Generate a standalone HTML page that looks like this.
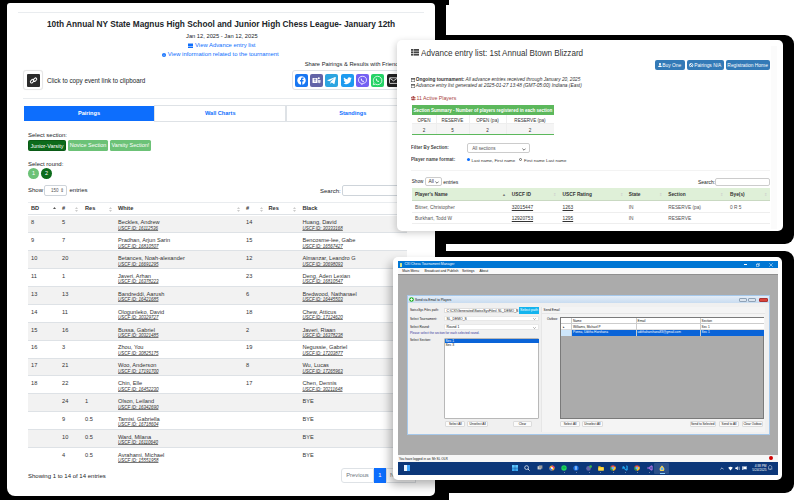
<!DOCTYPE html>
<html><head><meta charset="utf-8">
<style>
*{margin:0;padding:0;box-sizing:border-box}
html,body{width:800px;height:500px;overflow:hidden;background:#fff;font-family:"Liberation Sans",sans-serif;color:#212529}
.a{position:absolute;white-space:nowrap}
.blk{position:absolute;background:#000;border-radius:9px}
.card{position:absolute;background:#fff;overflow:hidden}
/* card1 */
#c1{left:7px;top:3px;width:428px;height:493.4px;border-radius:3px 4px 5px 8px}
#c2{left:397px;top:40px;width:386px;height:190.5px;border-radius:5px;box-shadow:-1px 2px 7px rgba(0,0,0,.2)}
#c3{left:393px;top:257px;width:389px;height:223px;border-radius:5px;box-shadow:-3px 5px 10px rgba(0,0,0,.3)}
.t6{font-size:6px;line-height:8px}
.row{position:absolute;left:21px;width:379px;height:17.87px;border-bottom:1px solid #dee2e6}
.row.g{background:#f2f2f2}
.c{position:absolute;font-size:5.65px;line-height:7px;color:#333;white-space:nowrap}
.u{position:absolute;font-size:4.5px;line-height:5px;color:#333;text-decoration:underline;text-decoration-thickness:0.5px;text-decoration-color:#777;text-underline-offset:0.4px;text-decoration-skip-ink:none;white-space:nowrap;font-style:italic}
</style></head><body>
<!-- black shapes -->
<div class="blk" style="left:-10px;top:-10px;width:456px;height:520px"></div>
<div style="position:absolute;left:436px;top:0;width:13px;height:4.7px;background:#000"></div>
<div style="position:absolute;left:436px;top:480px;width:13px;height:20px;background:#000"></div>
<div class="blk" style="left:385px;top:35px;width:409px;height:209px"></div>
<div class="blk" style="left:385px;top:251px;width:409px;height:242px"></div>

<!-- CARD 1 -->
<div class="card" id="c1">
  <div class="a" style="left:11px;top:9px;width:406px;height:1px;background:#e9ecef"></div>
  <div class="a" id="title" style="left:40px;top:15.4px;font-size:9.6px;line-height:12px;font-weight:bold;color:#212529;transform:scaleX(0.865);transform-origin:0 0">10th Annual NY State Magnus High School and Junior High Chess League- January 12th</div>
  <div class="a" id="date" style="left:179px;top:30.2px;font-size:5.75px;line-height:7px;color:#212529">Jan 12, 2025 - Jan 12, 2025</div>
  <div class="a" style="left:180.5px;top:40px;width:5.5px;height:4.5px;background:repeating-linear-gradient(0deg,#0d6efd 0 1px,#8cb8fb 1px 1.5px)"></div>
  <div class="a" id="val" style="left:188px;top:38.8px;font-size:5.9px;line-height:7px;color:#0d6efd">View Advance entry list</div>
  <svg class="a" style="left:154.6px;top:49.6px" width="4" height="4" viewBox="0 0 4 4"><circle cx="2" cy="2" r="2" fill="#0d6efd"/><rect x="1.7" y="1.6" width="0.6" height="1.6" fill="#fff"/><rect x="1.7" y="0.7" width="0.6" height="0.5" fill="#fff"/></svg>
  <div class="a" id="vinfo" style="left:160.8px;top:48px;font-size:5.9px;line-height:7px;color:#0d6efd">View information related to the tournament</div>
  <div class="a" style="left:297.7px;top:58px;font-size:5.75px;line-height:7px;color:#212529">Share Pairings &amp; Results with Friends</div>
  <!-- copy link -->
  <div class="a" style="left:16.4px;top:67.3px;width:20px;height:20px;border:1px solid #e6e6e6;border-radius:3px;background:#fff;box-shadow:0 0 1px rgba(0,0,0,.08)"></div>
  <div class="a" style="left:20px;top:71px;width:13px;height:13px;background:#2b2b2b;border-radius:1px"></div>
  <svg class="a" style="left:22px;top:73px" width="9" height="9" viewBox="0 0 9 9"><g fill="none" stroke="#fff" stroke-width="1"><rect x="1" y="4" width="4" height="2.4" rx="1.2" transform="rotate(-45 3 5)"/><rect x="4" y="2.5" width="4" height="2.4" rx="1.2" transform="rotate(-45 6 3.7)"/></g></svg>
  <div class="a" style="left:40px;top:74px;font-size:6.3px;line-height:7px;color:#212529">Click to copy event link to clipboard</div>
  <!-- share box -->
  <div class="a" style="left:285px;top:67px;width:150px;height:20px;border:1px solid #dee2e6;border-radius:3px"></div>
  <svg class="a" style="left:288px;top:71px" width="13" height="13" viewBox="0 0 13 13"><rect width="13" height="13" rx="2" fill="#1877f2"/><circle cx="6.5" cy="6.5" r="4.2" fill="#fff"/><path d="M7.3 11V7.4h1.1l.2-1.3H7.3v-.8c0-.4.1-.6.6-.6h.7V3.6c-.2 0-.6-.1-1-.1-1 0-1.6.6-1.6 1.7v.9H5v1.3h1v3.6z" fill="#1877f2"/></svg>
  <svg class="a" style="left:303px;top:71px" width="13" height="13" viewBox="0 0 13 13"><rect width="13" height="13" rx="2" fill="#6264a7"/><rect x="2.5" y="4" width="5" height="5" rx=".5" fill="#fff"/><path d="M3.8 5.2h2.4M5 5.2v2.8" stroke="#6264a7" stroke-width=".8"/><circle cx="8.8" cy="4.2" r="1" fill="#fff"/><path d="M8 6h2.5v2.2a1.3 1.3 0 0 1-2.5 0z" fill="#fff" opacity=".8"/></svg>
  <svg class="a" style="left:318px;top:71px" width="13" height="13" viewBox="0 0 13 13"><rect width="13" height="13" rx="2" fill="#2ca5e0"/><path d="M2.2 6.3l8-3.2c.4-.1.7.1.6.6L9.5 9.8c-.1.4-.4.5-.7.3L6.8 8.6l-1 .9c-.1.1-.2.2-.4.2l.1-2 3.6-3.2c.2-.2 0-.2-.2-.1L4.4 7.2 2.5 6.6c-.4-.1-.4-.4-.3-.3z" fill="#fff"/></svg>
  <svg class="a" style="left:334px;top:71px" width="13" height="13" viewBox="0 0 13 13"><rect width="13" height="13" rx="2" fill="#1d9bf0"/><path d="M10.8 4.1c-.3.1-.7.2-1 .3.4-.2.6-.6.8-1-.3.2-.7.3-1.1.4a1.7 1.7 0 0 0-2.9 1.6A4.9 4.9 0 0 1 3 3.6a1.7 1.7 0 0 0 .5 2.3c-.3 0-.5-.1-.8-.2 0 .8.6 1.5 1.4 1.7-.3.1-.5.1-.8 0 .2.7.9 1.2 1.6 1.2A3.4 3.4 0 0 1 2.4 9.3 4.9 4.9 0 0 0 10 5z" fill="#fff"/></svg>
  <svg class="a" style="left:349px;top:71px" width="13" height="13" viewBox="0 0 13 13"><rect width="13" height="13" rx="2" fill="#7360f2"/><path d="M6.5 2.3c2.3 0 4 1.2 4 3.6 0 2.3-1.7 3.5-4 3.5l-.6 1.3-.6-1.4c-1.8-.3-2.8-1.5-2.8-3.4 0-2.4 1.7-3.6 4-3.6z" fill="none" stroke="#fff" stroke-width=".8"/><path d="M5 4.6c.2-.2.5-.1.6.1l.3.5c.1.2 0 .4-.1.5.2.5.6.9 1.1 1.1.1-.1.3-.2.5-.1l.5.3c.2.1.3.4.1.6-.3.4-.7.4-1.2.2A3.5 3.5 0 0 1 4.9 5.8c-.2-.5-.2-.9.1-1.2z" fill="#fff"/></svg>
  <svg class="a" style="left:364px;top:71px" width="13" height="13" viewBox="0 0 13 13"><rect width="13" height="13" rx="2" fill="#25d366"/><path d="M6.5 2.3a4.2 4.2 0 0 0-3.6 6.3l-.6 2.1 2.2-.6a4.2 4.2 0 1 0 2-7.8z" fill="none" stroke="#fff" stroke-width=".8"/><path d="M5 4.6c.2-.2.5-.1.6.1l.3.5c.1.2 0 .4-.1.5.2.5.6.9 1.1 1.1.1-.1.3-.2.5-.1l.5.3c.2.1.3.4.1.6-.3.4-.7.4-1.2.2A3.5 3.5 0 0 1 4.9 5.8c-.2-.5-.2-.9.1-1.2z" fill="#fff"/></svg>
  <svg class="a" style="left:380px;top:71px" width="13" height="13" viewBox="0 0 13 13"><rect width="13" height="13" rx="2" fill="#212121"/><rect x="2.5" y="3.8" width="8" height="5.6" rx=".6" fill="none" stroke="#fff" stroke-width=".8"/><path d="M2.7 4.2l3.8 2.7 3.8-2.7" fill="none" stroke="#fff" stroke-width=".8"/></svg>
  <div class="a" style="left:16px;top:95px;width:411px;height:1px;background:#e9ecef"></div>
  <!-- tabs -->
  <div class="a" style="left:16.75px;top:102.75px;width:130.5px;height:14.9px;background:#0d6efd;color:#fff;font-size:5.6px;line-height:14.9px;text-align:center;font-weight:bold">Pairings</div>
  <div class="a" style="left:147.25px;top:102.2px;width:132px;height:16.6px;border:1px solid #dee2e6;color:#0d6efd;font-size:5.6px;line-height:14.6px;text-align:center;font-weight:bold">Wall Charts</div>
  <div class="a" style="left:279.25px;top:102.2px;width:133px;height:16.6px;border:1px solid #dee2e6;color:#0d6efd;font-size:5.6px;line-height:14.6px;text-align:center;font-weight:bold">Standings</div>
  <div class="a" style="left:21px;top:129px;font-size:6px;line-height:7px">Select section:</div>
  <div class="a" style="left:21px;top:137px;width:38px;height:11px;background:#0c6b1b;border:0.5px solid #0a5a16;border-radius:1.5px;color:#fff;font-size:5.5px;line-height:10px;text-align:center">Junior-Varsity</div>
  <div class="a" style="left:61px;top:137px;width:40px;height:11px;background:#6cc277;border-radius:1.5px;color:#fff;font-size:5.5px;line-height:11px;text-align:center">Novice Section</div>
  <div class="a" style="left:103px;top:137px;width:41px;height:11px;background:#6cc277;border-radius:1.5px;color:#fff;font-size:5.5px;line-height:11px;text-align:center">Varsity Section!</div>
  <div class="a" style="left:21px;top:158px;font-size:6px;line-height:7px">Select round:</div>
  <div class="a" style="left:21px;top:165px;width:11px;height:11px;border-radius:50%;background:#6cc277;color:#fff;font-size:5.5px;line-height:11px;text-align:center">1</div>
  <div class="a" style="left:34px;top:165px;width:11px;height:11px;border-radius:50%;background:#0c6b1b;color:#fff;font-size:5.5px;line-height:11px;text-align:center">2</div>
  <div class="a" style="left:21px;top:183.7px;font-size:6px;line-height:7px">Show</div>
  <div class="a" style="left:37px;top:181.5px;width:23px;height:11.5px;border:1px solid #ced4da;border-radius:2px;font-size:4.5px;line-height:9px;padding-left:6px;color:#555">150 &#8661;</div>
  <div class="a" style="left:62.5px;top:183.7px;font-size:6px;line-height:7px">entries</div>
  <div class="a" style="left:313px;top:184.8px;font-size:6px;line-height:7px">Search:</div>
  <div class="a" style="left:335px;top:181.5px;width:100px;height:11.7px;border:1px solid #ced4da;border-radius:2px"></div>
  <!-- table header -->
  <div class="a" style="left:21px;top:199px;width:379px;height:13px;border-top:1px solid #e9ecef;border-bottom:1.5px solid #dee2e6"></div>
  <div id="thead"><div class="c" style="left:24px;top:202.0px;font-weight:bold">BD</div>
<div class="c" style="left:55px;top:202.0px;font-weight:bold">#</div>
<div class="c" style="left:78px;top:202.0px;font-weight:bold">Res</div>
<div class="c" style="left:111px;top:202.0px;font-weight:bold">White</div>
<div class="c" style="left:239px;top:202.0px;font-weight:bold">#</div>
<div class="c" style="left:261.5px;top:202.0px;font-weight:bold">Res</div>
<div class="c" style="left:295.4px;top:202.0px;font-weight:bold">Black</div>
<svg class="a" style="left:45.5px;top:203.5px" width="3" height="5" viewBox="0 0 3 5"><path d="M0 2L1.5 0L3 2Z" fill="#555"/><path d="M0 3L1.5 5L3 3Z" fill="#fff"/></svg>
<svg class="a" style="left:68.1px;top:203.5px" width="3" height="5" viewBox="0 0 3 5"><path d="M0 2L1.5 0L3 2Z" fill="#ccc"/><path d="M0 3L1.5 5L3 3Z" fill="#ccc"/></svg>
<svg class="a" style="left:102.0px;top:203.5px" width="3" height="5" viewBox="0 0 3 5"><path d="M0 2L1.5 0L3 2Z" fill="#ccc"/><path d="M0 3L1.5 5L3 3Z" fill="#ccc"/></svg>
<svg class="a" style="left:229.5px;top:203.5px" width="3" height="5" viewBox="0 0 3 5"><path d="M0 2L1.5 0L3 2Z" fill="#ccc"/><path d="M0 3L1.5 5L3 3Z" fill="#ccc"/></svg>
<svg class="a" style="left:252.5px;top:203.5px" width="3" height="5" viewBox="0 0 3 5"><path d="M0 2L1.5 0L3 2Z" fill="#ccc"/><path d="M0 3L1.5 5L3 3Z" fill="#ccc"/></svg>
<svg class="a" style="left:286.1px;top:203.5px" width="3" height="5" viewBox="0 0 3 5"><path d="M0 2L1.5 0L3 2Z" fill="#ccc"/><path d="M0 3L1.5 5L3 3Z" fill="#ccc"/></svg></div><!--/thead-->
  <div id="tbody"><div class="row g" style="top:212.6px"></div>
<div class="c" style="left:24px;top:216.29999999999998px">8</div>
<div class="c" style="left:55px;top:216.29999999999998px">5</div>
<div class="c" style="left:111px;top:216.29999999999998px">Beckles, Andrew</div>
<div class="c" style="left:239px;top:216.29999999999998px">14</div>
<div class="c" style="left:295.4px;top:216.29999999999998px">Huang, David</div>
<div class="u" style="left:111px;top:222.79999999999998px">USCF ID: 16112536</div>
<div class="u" style="left:295.4px;top:222.79999999999998px">USCF ID: 30333168</div>
<div class="row" style="top:230.47px"></div>
<div class="c" style="left:24px;top:234.17px">9</div>
<div class="c" style="left:55px;top:234.17px">7</div>
<div class="c" style="left:111px;top:234.17px">Pradhan, Arjun Sarin</div>
<div class="c" style="left:239px;top:234.17px">15</div>
<div class="c" style="left:295.4px;top:234.17px">Bencosme-lee, Gabe</div>
<div class="u" style="left:111px;top:240.67px">USCF ID: 16810507</div>
<div class="u" style="left:295.4px;top:240.67px">USCF ID: 16567427</div>
<div class="row g" style="top:248.34px"></div>
<div class="c" style="left:24px;top:252.04px">10</div>
<div class="c" style="left:55px;top:252.04px">20</div>
<div class="c" style="left:111px;top:252.04px">Betances, Noah-alexander</div>
<div class="c" style="left:239px;top:252.04px">12</div>
<div class="c" style="left:295.4px;top:252.04px">Almanzar, Leandro G</div>
<div class="u" style="left:111px;top:258.54px">USCF ID: 16691295</div>
<div class="u" style="left:295.4px;top:258.54px">USCF ID: 30698093</div>
<div class="row" style="top:266.21px"></div>
<div class="c" style="left:24px;top:269.90999999999997px">11</div>
<div class="c" style="left:55px;top:269.90999999999997px">1</div>
<div class="c" style="left:111px;top:269.90999999999997px">Javeri, Arhan</div>
<div class="c" style="left:239px;top:269.90999999999997px">23</div>
<div class="c" style="left:295.4px;top:269.90999999999997px">Deng, Aden Lexian</div>
<div class="u" style="left:111px;top:276.40999999999997px">USCF ID: 16378223</div>
<div class="u" style="left:295.4px;top:276.40999999999997px">USCF ID: 16810547</div>
<div class="row g" style="top:284.08px"></div>
<div class="c" style="left:24px;top:287.78px">13</div>
<div class="c" style="left:55px;top:287.78px">13</div>
<div class="c" style="left:111px;top:287.78px">Bandreddi, Aarush</div>
<div class="c" style="left:239px;top:287.78px">6</div>
<div class="c" style="left:295.4px;top:287.78px">Bredwood, Nathanael</div>
<div class="u" style="left:111px;top:294.28px">USCF ID: 16421685</div>
<div class="u" style="left:295.4px;top:294.28px">USCF ID: 16445503</div>
<div class="row" style="top:301.95px"></div>
<div class="c" style="left:24px;top:305.65px">14</div>
<div class="c" style="left:55px;top:305.65px">11</div>
<div class="c" style="left:111px;top:305.65px">Ologunleko, David</div>
<div class="c" style="left:239px;top:305.65px">18</div>
<div class="c" style="left:295.4px;top:305.65px">Chew, Atticus</div>
<div class="u" style="left:111px;top:312.15px">USCF ID: 30329727</div>
<div class="u" style="left:295.4px;top:312.15px">USCF ID: 17124620</div>
<div class="row g" style="top:319.82px"></div>
<div class="c" style="left:24px;top:323.52px">15</div>
<div class="c" style="left:55px;top:323.52px">16</div>
<div class="c" style="left:111px;top:323.52px">Bussa, Gabriel</div>
<div class="c" style="left:239px;top:323.52px">2</div>
<div class="c" style="left:295.4px;top:323.52px">Javeri, Riaan</div>
<div class="u" style="left:111px;top:330.02px">USCF ID: 30321485</div>
<div class="u" style="left:295.4px;top:330.02px">USCF ID: 16378238</div>
<div class="row" style="top:337.69px"></div>
<div class="c" style="left:24px;top:341.39px">16</div>
<div class="c" style="left:55px;top:341.39px">3</div>
<div class="c" style="left:111px;top:341.39px">Zhou, You</div>
<div class="c" style="left:239px;top:341.39px">19</div>
<div class="c" style="left:295.4px;top:341.39px">Negussie, Gabriel</div>
<div class="u" style="left:111px;top:347.89px">USCF ID: 30825175</div>
<div class="u" style="left:295.4px;top:347.89px">USCF ID: 17203877</div>
<div class="row g" style="top:355.56px"></div>
<div class="c" style="left:24px;top:359.26px">17</div>
<div class="c" style="left:55px;top:359.26px">21</div>
<div class="c" style="left:111px;top:359.26px">Woo, Anderson</div>
<div class="c" style="left:239px;top:359.26px">8</div>
<div class="c" style="left:295.4px;top:359.26px">Wu, Lucas</div>
<div class="u" style="left:111px;top:365.76px">USCF ID: 17191700</div>
<div class="u" style="left:295.4px;top:365.76px">USCF ID: 17265963</div>
<div class="row" style="top:373.43px"></div>
<div class="c" style="left:24px;top:377.13px">18</div>
<div class="c" style="left:55px;top:377.13px">22</div>
<div class="c" style="left:111px;top:377.13px">Chin, Elle</div>
<div class="c" style="left:239px;top:377.13px">17</div>
<div class="c" style="left:295.4px;top:377.13px">Chen, Dennis</div>
<div class="u" style="left:111px;top:383.63px">USCF ID: 16452230</div>
<div class="u" style="left:295.4px;top:383.63px">USCF ID: 30211648</div>
<div class="row g" style="top:391.3px"></div>
<div class="c" style="left:55px;top:395.0px">24</div>
<div class="c" style="left:78px;top:395.0px">1</div>
<div class="c" style="left:111px;top:395.0px">Olson, Leiland</div>
<div class="c" style="left:295.4px;top:395.0px">BYE</div>
<div class="u" style="left:111px;top:401.5px">USCF ID: 16342690</div>
<div class="row" style="top:409.17px"></div>
<div class="c" style="left:55px;top:412.87px">9</div>
<div class="c" style="left:78px;top:412.87px">0.5</div>
<div class="c" style="left:111px;top:412.87px">Tamisi, Gabriella</div>
<div class="c" style="left:295.4px;top:412.87px">BYE</div>
<div class="u" style="left:111px;top:419.37px">USCF ID: 16718604</div>
<div class="row g" style="top:427.04px"></div>
<div class="c" style="left:55px;top:430.74px">10</div>
<div class="c" style="left:78px;top:430.74px">0.5</div>
<div class="c" style="left:111px;top:430.74px">Ward, Milana</div>
<div class="c" style="left:295.4px;top:430.74px">BYE</div>
<div class="u" style="left:111px;top:437.24px">USCF ID: 16110640</div>
<div class="row" style="top:444.91px;border-bottom:none"></div>
<div class="c" style="left:55px;top:448.61px">4</div>
<div class="c" style="left:78px;top:448.61px">0.5</div>
<div class="c" style="left:111px;top:448.61px">Avrahami, Michael</div>
<div class="c" style="left:295.4px;top:448.61px">BYE</div>
<div class="u" style="left:111px;top:455.11px">USCF ID: 15551958</div></div><!--/tbody-->
  <div class="a" style="left:21px;top:470px;font-size:6px;line-height:7px">Showing 1 to 14 of 14 entries</div>
  <div class="a" style="left:334px;top:464.8px;width:33px;height:15.2px;border:1px solid #dee2e6;border-radius:3px 0 0 3px;color:#6c757d;font-size:5.8px;line-height:13.2px;text-align:center">Previous</div>
  <div class="a" style="left:366.5px;top:464.8px;width:12.5px;height:15.2px;background:#0d6efd;color:#fff;font-size:5.8px;line-height:15.2px;text-align:center">1</div>
  <div class="a" style="left:379px;top:464.8px;width:30px;height:15.2px;border:1px solid #dee2e6;color:#6c757d;font-size:5.8px;line-height:13.2px;padding-left:3px">Next</div>
</div>

<!-- CARD 2 -->
<div class="card" id="c2">
  <div class="a" style="left:374px;top:6px;width:6px;height:183px;background:#fbfbfb"></div>
  <svg class="a" style="left:14px;top:9.2px" width="8" height="6.6" viewBox="0 0 8 6.6"><g fill="#444"><rect x="0" y="0" width="2" height="1.8"/><rect x="2.5" y="0" width="5.5" height="1.8"/><rect x="0" y="2.4" width="2" height="1.8"/><rect x="2.5" y="2.4" width="5.5" height="1.8"/><rect x="0" y="4.8" width="2" height="1.8"/><rect x="2.5" y="4.8" width="5.5" height="1.8"/></g></svg>
  <div class="a" id="t2title" style="left:24px;top:7.9px;font-size:9px;line-height:11px;transform:scaleX(0.9);transform-origin:0 0;color:#333">Advance entry list: 1st Annual Btown Blizzard</div>
  <div class="a" style="left:257.5px;top:19.5px;width:30px;height:10.2px;background:#337ab7;border-radius:2px;color:#fff;font-size:4.9px;line-height:11px;text-align:center"><svg style="vertical-align:-0.5px;margin-right:0.6px" width="4" height="4.4" viewBox="0 0 4 4.4"><circle cx="2" cy="1.1" r="1.1" fill="#fff"/><path d="M0 4.4C0 3 .8 2.4 2 2.4S4 3 4 4.4z" fill="#fff"/></svg>Buy One</div>
  <div class="a" style="left:289.75px;top:19.5px;width:37px;height:10.2px;background:#337ab7;border-radius:2px;color:#fff;font-size:4.9px;line-height:11px;text-align:center"><svg style="vertical-align:-0.5px;margin-right:0.6px" width="4.4" height="4.4" viewBox="0 0 4.4 4.4"><circle cx="2.2" cy="2.2" r="1.75" fill="none" stroke="#fff" stroke-width="0.8"/><path d="M1 1L3.4 3.4" stroke="#fff" stroke-width="0.8"/></svg>Pairings N/A</div>
  <div class="a" style="left:328.75px;top:19.5px;width:43.75px;height:10.2px;background:#337ab7;border-radius:2px;color:#fff;font-size:4.9px;line-height:11px;text-align:center">Registration Home</div>
  <div class="a" id="t2l1" style="left:14px;top:37.2px;font-style:italic;font-size:4.76px;line-height:6px;color:#333"><svg style="vertical-align:-0.4px;margin-right:0.8px" width="4" height="4" viewBox="0 0 4 4"><rect x="0.2" y="0.4" width="3.6" height="3.4" fill="none" stroke="#444" stroke-width="0.45"/><rect x="0.2" y="0.4" width="3.6" height="1.1" fill="#444"/></svg><b style="font-style:normal">Ongoing tournament:</b> All advance entries received through January 20, 2025</div>
  <div class="a" id="t2l2" style="left:14px;top:43.4px;font-style:italic;font-size:4.84px;line-height:6px;color:#333"><svg style="vertical-align:-0.4px;margin-right:0.8px" width="4" height="4" viewBox="0 0 4 4"><rect x="0.2" y="0.4" width="3.6" height="3.4" fill="none" stroke="#444" stroke-width="0.45"/><rect x="0.2" y="0.4" width="3.6" height="1.1" fill="#444"/></svg>Advance entry list generated at 2025-01-27 13:48 (GMT-05:00) Indiana (East)</div>
  <div class="a" id="t2act" style="left:14px;top:55px;font-size:5.25px;line-height:6px;color:#a94442"><svg style="vertical-align:-0.6px;margin-right:0.8px" width="4.6" height="4.2" viewBox="0 0 4.6 4.2"><g fill="#a94442"><circle cx="2.3" cy="1" r="1"/><path d="M.8 4.2c0-1.3.6-2 1.5-2s1.5.7 1.5 2z"/><circle cx="0.8" cy="1.5" r=".7"/><circle cx="3.8" cy="1.5" r=".7"/><path d="M0 4c0-1 .3-1.6.8-1.6s.6.4.6.6z"/><path d="M4.6 4c0-1-.3-1.6-.8-1.6s-.6.4-.6.6z"/></g></svg>11 Active Players</div>
  <!-- summary table -->
  <div class="a" style="left:15px;top:65px;width:142px;height:9.5px;background:#5cb85c;"></div><div class="a" id="t2sum" style="left:16.5px;top:65.5px;color:#fff;font-size:4.53px;line-height:9.25px;font-weight:bold">Section Summary - Number of players registered in each section</div>
  <div class="a" style="left:15px;top:74.75px;width:142px;height:9.5px;border-bottom:1px solid #eee"></div>
  <div class="a" style="left:15px;top:84.25px;width:142px;height:10.25px;background:#f5f5f5;border-bottom:1px solid #5cb85c"></div>
  <div class="a" style="left:15px;top:75.5px;width:24px;font-size:4.6px;line-height:9.5px;text-align:center;color:#333">OPEN</div>
  <div class="a" style="left:39px;top:75.5px;width:33px;font-size:4.6px;line-height:9.5px;text-align:center;color:#333">RESERVE</div>
  <div class="a" style="left:72px;top:75.5px;width:37px;font-size:4.6px;line-height:9.5px;text-align:center;color:#333">OPEN (pa)</div>
  <div class="a" style="left:109px;top:75.5px;width:48px;font-size:4.6px;line-height:9.5px;text-align:center;color:#333">RESERVE (pa)</div>
  <div class="a" style="left:15px;top:85.5px;width:24px;font-size:4.6px;line-height:10px;text-align:center;color:#333">2</div>
  <div class="a" style="left:39px;top:85.5px;width:33px;font-size:4.6px;line-height:10px;text-align:center;color:#333">5</div>
  <div class="a" style="left:72px;top:85.5px;width:37px;font-size:4.6px;line-height:10px;text-align:center;color:#333">2</div>
  <div class="a" style="left:109px;top:85.5px;width:48px;font-size:4.6px;line-height:10px;text-align:center;color:#333">2</div>
  <div class="a" style="left:39px;top:74.75px;width:1px;height:19.6px;background:#eee"></div>
  <div class="a" style="left:72px;top:74.75px;width:1px;height:19.6px;background:#eee"></div>
  <div class="a" style="left:109px;top:74.75px;width:1px;height:19.6px;background:#eee"></div>
  <!-- filter -->
  <div class="a" style="left:14px;top:104.8px;font-size:4.5px;line-height:6px;color:#222;font-weight:bold;letter-spacing:0.05px;opacity:.85">Filter By Section:</div>
  <div class="a" style="left:69.75px;top:103px;width:63.25px;height:10.25px;border:1px solid #ccc;border-radius:2px;font-size:4.6px;line-height:9.5px;padding-left:4.5px;color:#555">All sections<svg style="position:absolute;right:3px;top:3.5px" width="4" height="3" viewBox="0 0 4 3"><path d="M0.4 0.6L2 2.2L3.6 0.6" fill="none" stroke="#333" stroke-width="0.7"/></svg></div>
  <div class="a" style="left:14px;top:116.5px;font-size:4.5px;line-height:6px;color:#222;font-weight:bold;letter-spacing:0.05px;opacity:.85">Player name format:</div>
  <div class="a" style="left:69.5px;top:117.7px;width:3.6px;height:3.6px;border-radius:50%;background:#0d6efd"></div>
  <div class="a" style="left:74.5px;top:118px;font-size:4.4px;line-height:6px;color:#333">Last name, First name</div>
  <div class="a" style="left:121.7px;top:117.5px;width:3.8px;height:3.8px;border-radius:50%;border:0.5px solid #666"></div>
  <div class="a" style="left:127px;top:118px;font-size:4.4px;line-height:6px;color:#333">First name Last name</div>
  <div class="a" style="left:14px;top:130px;width:359px;height:1px;background:#f3f3f3"></div>
  <div class="a" style="left:14.8px;top:139px;font-size:4.6px;line-height:6px;color:#222">Show</div>
  <div class="a" style="left:27.6px;top:137.2px;width:17.6px;height:9.3px;border:0.7px solid #ccc;border-radius:2px;font-size:4.8px;line-height:7.6px;padding-left:3px;color:#333">All<svg style="position:absolute;right:2px;top:3px" width="4" height="3" viewBox="0 0 4 3"><path d="M0.4 0.6L2 2.2L3.6 0.6" fill="none" stroke="#333" stroke-width="0.7"/></svg></div>
  <div class="a" style="left:46.25px;top:139px;font-size:5px;line-height:6px;color:#222">entries</div>
  <div class="a" style="left:301px;top:139px;font-size:5px;line-height:6px;color:#222">Search:</div>
  <div class="a" style="left:318px;top:137.5px;width:55px;height:8.5px;border:1px solid #ccc;border-radius:2px"></div>
  <!-- table -->
  <div class="a" style="left:15px;top:148.25px;width:358px;height:12.25px;background:#dff0d8;border-bottom:1px solid #c9d9c2"></div>
  <div class="a" style="left:18px;top:152.2px;font-size:4.8px;line-height:6px;color:#333;font-weight:bold">Player's Name</div>
  <div class="a" style="left:114.75px;top:152.2px;font-size:4.8px;line-height:6px;color:#333;font-weight:bold">USCF ID</div>
  <div class="a" style="left:165.5px;top:152.2px;font-size:4.8px;line-height:6px;color:#333;font-weight:bold">USCF Rating</div>
  <div class="a" style="left:231.75px;top:152.2px;font-size:4.8px;line-height:6px;color:#333;font-weight:bold">State</div>
  <div class="a" style="left:271.25px;top:152.2px;font-size:4.8px;line-height:6px;color:#333;font-weight:bold">Section</div>
  <div class="a" style="left:333px;top:152.2px;font-size:4.8px;line-height:6px;color:#333;font-weight:bold">Bye(s)</div>
  <div class="a" style="left:105px;top:152px;font-size:4px;line-height:6px;color:#777">&#9650;</div>
  <div class="a" style="left:156px;top:152px;font-size:4px;line-height:6px;color:#ccc">&#8661;</div>
  <div class="a" style="left:223px;top:152px;font-size:4px;line-height:6px;color:#ccc">&#8661;</div>
  <div class="a" style="left:262px;top:152px;font-size:4px;line-height:6px;color:#ccc">&#8661;</div>
  <div class="a" style="left:323px;top:152px;font-size:4px;line-height:6px;color:#ccc">&#8661;</div>
  <div class="a" style="left:366.5px;top:152px;font-size:4px;line-height:6px;color:#ccc">&#8661;</div>
  <div class="a" style="left:15px;top:160.5px;width:358px;height:12px;border-bottom:1px solid #eee"></div>
  <div class="a" style="left:15px;top:172.5px;width:358px;height:11.5px;border-bottom:1px solid #eee"></div>
  <div class="a" style="left:18px;top:164.7px;font-size:4.8px;line-height:6px;color:#555">Bitner, Christopher</div>
  <div class="a" style="left:114.75px;top:164.7px;font-size:4.8px;line-height:6px;color:#333;text-decoration:underline;text-decoration-thickness:0.4px;text-decoration-skip-ink:none;text-underline-offset:0.5px">32015447</div>
  <div class="a" style="left:165.5px;top:164.7px;font-size:4.8px;line-height:6px;color:#333;text-decoration:underline;text-decoration-thickness:0.4px;text-decoration-skip-ink:none;text-underline-offset:0.5px">1263</div>
  <div class="a" style="left:231.75px;top:164.7px;font-size:4.8px;line-height:6px;color:#555">IN</div>
  <div class="a" style="left:271.25px;top:164.7px;font-size:4.8px;line-height:6px;color:#555">RESERVE (pa)</div>
  <div class="a" style="left:333px;top:164.7px;font-size:4.8px;line-height:6px;color:#555">0 R 5</div>
  <div class="a" style="left:18px;top:176.2px;font-size:4.8px;line-height:6px;color:#555">Burkhart, Todd W</div>
  <div class="a" style="left:114.75px;top:176.2px;font-size:4.8px;line-height:6px;color:#333;text-decoration:underline;text-decoration-thickness:0.4px;text-decoration-skip-ink:none;text-underline-offset:0.5px">12920753</div>
  <div class="a" style="left:165.5px;top:176.2px;font-size:4.8px;line-height:6px;color:#333;text-decoration:underline;text-decoration-thickness:0.4px;text-decoration-skip-ink:none;text-underline-offset:0.5px">1295</div>
  <div class="a" style="left:231.75px;top:176.2px;font-size:4.8px;line-height:6px;color:#555">IN</div>
  <div class="a" style="left:271.25px;top:176.2px;font-size:4.8px;line-height:6px;color:#555">RESERVE</div>
</div>


<!-- CARD 3 -->
<div class="card" id="c3">
  <!-- window -->
  <div class="a" style="left:5px;top:4.1px;width:379.5px;height:6.9px;background:#0076d3"></div>
  <div class="a" style="left:6.75px;top:5.5px;width:1.8px;height:4px;background:#d8e48a;border-radius:0.5px"></div>
  <div class="a" id="c3t" style="left:11.4px;top:4.1px;font-size:3.45px;line-height:6.9px;color:#fff">CXI Chess Tournament Manager</div>
  <div class="a" style="left:351.3px;top:7.3px;width:2.8px;height:0.5px;background:#fff"></div>
  <svg class="a" style="left:363px;top:5.6px" width="4" height="4" viewBox="0 0 4 4"><rect x="0.3" y="1.2" width="2.5" height="2.5" fill="none" stroke="#fff" stroke-width="0.45"/><path d="M1.2 1.2V0.3h2.5v2.5h-0.9" fill="none" stroke="#fff" stroke-width="0.45"/></svg>
  <svg class="a" style="left:376.3px;top:5.6px" width="4" height="4" viewBox="0 0 4 4"><path d="M0.3 0.3L3.7 3.7M3.7 0.3L0.3 3.7" stroke="#fff" stroke-width="0.5"/></svg>
  <div class="a" style="left:5px;top:11px;width:379.5px;height:6.25px;background:#f9f9f9"></div>
  <div class="a" id="m1" style="left:9.25px;top:11px;font-size:3.4px;line-height:6px;color:#111">Main Menu</div>
  <div class="a" id="m2" style="left:31.4px;top:11px;font-size:3.4px;line-height:6px;color:#111">Broadcast and Publish</div>
  <div class="a" id="m3" style="left:69.1px;top:11px;font-size:3.4px;line-height:6px;color:#111">Settings</div>
  <div class="a" id="m4" style="left:86.4px;top:11px;font-size:3.4px;line-height:6px;color:#111">About</div>
  <div class="a" style="left:5px;top:17.25px;width:379.5px;height:181px;background:#ababab;border-top:1px solid #8f8f8f"></div>
  <div class="a" style="left:5px;top:198px;width:379.5px;height:6.7px;background:#f6f6f6"></div>
  <div class="a" style="left:6px;top:199px;font-size:3.2px;line-height:6.7px;color:#111">You have logged in as: Mr SL OLR</div>
  <div class="a" style="left:5px;top:204.7px;width:379.5px;height:13px;background:#0c3779"></div>
  <div class="a" style="left:11.3px;top:208.2px;width:2.8px;height:5.6px;background:#eaf4ff"></div>
  <div class="a" style="left:14.4px;top:208.2px;width:2.9px;height:5.6px;background:#3fa6ff"></div>
  <div id="tbicons"><svg class="a" style="left:118.90px;top:208.00px" width="6" height="6" viewBox="0 0 6 6"><rect x="0" y="0" width="2.8" height="2.8" fill="#5cc6ff"/><rect x="3.2" y="0" width="2.8" height="2.8" fill="#5cc6ff"/><rect x="0" y="3.2" width="2.8" height="2.8" fill="#3aa8f0"/><rect x="3.2" y="3.2" width="2.8" height="2.8" fill="#3aa8f0"/></svg>
<svg class="a" style="left:131.40px;top:208.00px" width="6" height="6" viewBox="0 0 6 6"><circle cx="2.6" cy="2.6" r="1.9" fill="none" stroke="#fff" stroke-width="0.7"/><path d="M4 4L5.6 5.6" stroke="#fff" stroke-width="0.8"/></svg>
<svg class="a" style="left:143.80px;top:208.00px" width="6" height="6" viewBox="0 0 6 6"><rect x="0.6" y="1.2" width="3.6" height="3.2" fill="#d8d8d8"/><rect x="1.8" y="0.4" width="3.6" height="3.2" fill="#9a9a9a"/></svg>
<svg class="a" style="left:156.10px;top:208.00px" width="6" height="6" viewBox="0 0 6 6"><circle cx="3" cy="3" r="2.6" fill="#f0a030"/><path d="M3 0.4A2.6 2.6 0 0 1 5.6 3H3z" fill="#e0407a"/><path d="M0.4 3A2.6 2.6 0 0 0 3 5.6V3z" fill="#3a7ef0"/><circle cx="3" cy="3" r="1" fill="#fff"/></svg>
<svg class="a" style="left:167.90px;top:208.00px" width="6" height="6" viewBox="0 0 6 6"><circle cx="3" cy="3" r="2.7" fill="#1ed760"/><path d="M1.4 2.2c1-.4 2.2-.3 3.2.2M1.6 3.2c.9-.3 1.8-.2 2.6.2" stroke="#083" stroke-width="0.5" fill="none"/></svg>
<svg class="a" style="left:180.00px;top:208.00px" width="6" height="6" viewBox="0 0 6 6"><circle cx="3" cy="3" r="2.6" fill="#1a73e8"/><path d="M3 1.2v3.6" stroke="#fff" stroke-width="0.9"/></svg>
<svg class="a" style="left:193.20px;top:208.00px" width="6" height="6" viewBox="0 0 6 6"><circle cx="2.5" cy="3.4" r="2.3" fill="#6264a7"/><circle cx="4.6" cy="1.6" r="1.4" fill="#3cb44a"/></svg>
<svg class="a" style="left:204.70px;top:208.00px" width="6" height="6" viewBox="0 0 6 6"><path d="M0.3 1.2h2l.6.7h2.8v3.6H0.3z" fill="#f5c518"/><rect x="0.3" y="2.6" width="5.4" height="2.9" fill="#ffd94a"/></svg>
<svg class="a" style="left:217.20px;top:208.00px" width="6" height="6" viewBox="0 0 6 6"><circle cx="3" cy="3" r="2.7" fill="#db4437"/><path d="M3 3L5.3 1.6A2.7 2.7 0 0 1 3 5.7z" fill="#f4c20d"/><path d="M3 3L3 5.7A2.7 2.7 0 0 1 0.5 1.8z" fill="#0f9d58"/><circle cx="3" cy="3" r="1.2" fill="#4285f4" stroke="#fff" stroke-width="0.4"/></svg>
<svg class="a" style="left:229.00px;top:208.00px" width="6" height="6" viewBox="0 0 6 6"><path d="M4.3 0.3L5.7 1v4l-1.4.7L1.4 3.4 0.4 4.2V1.8l1-.8 2.9 2.2z" fill="#23a9f2"/><path d="M4.3 1.8v2.6L2.4 3z" fill="#0c3779"/></svg>
<svg class="a" style="left:241.20px;top:208.00px" width="6" height="6" viewBox="0 0 6 6"><circle cx="3" cy="3" r="2.7" fill="#db4437"/><path d="M3 3L5.3 1.6A2.7 2.7 0 0 1 3 5.7z" fill="#f4c20d"/><path d="M3 3L3 5.7A2.7 2.7 0 0 1 0.5 1.8z" fill="#0f9d58"/><circle cx="3" cy="3" r="1.2" fill="#4285f4" stroke="#fff" stroke-width="0.4"/></svg>
<svg class="a" style="left:253.50px;top:208.00px" width="6" height="6" viewBox="0 0 6 6"><path d="M4.4 0.3L5.7 1v4l-1.3.7L1.6 3.5 0.5 4.3V1.7l1.1.8z" fill="#9b6bd8"/><path d="M4.4 1.9v2.2L3 3z" fill="#0c3779"/></svg>
<div class="a" style="left:261px;top:205.5px;width:15px;height:11.5px;background:rgba(255,255,255,.13);border-radius:1px"></div>
<svg class="a" style="left:265.60px;top:208.00px" width="6" height="6" viewBox="0 0 6 6"><path d="M3 0.4c1.4 1.4 2.4 2.6 2.4 3.6A2.4 2.4 0 0 1 .6 4c0-1 1-2.2 2.4-3.6z" fill="#ffd54a"/><circle cx="3" cy="3.8" r="1.4" fill="#5ab0ff"/></svg>
<div class="a" style="left:170.50px;top:215.4px;width:0.8px;height:0.8px;background:#9ab;border-radius:50%"></div>
<div class="a" style="left:182.60px;top:215.4px;width:0.8px;height:0.8px;background:#9ab;border-radius:50%"></div>
<div class="a" style="left:195.80px;top:215.4px;width:0.8px;height:0.8px;background:#9ab;border-radius:50%"></div>
<div class="a" style="left:207.30px;top:215.4px;width:0.8px;height:0.8px;background:#9ab;border-radius:50%"></div>
<div class="a" style="left:219.80px;top:215.4px;width:0.8px;height:0.8px;background:#9ab;border-radius:50%"></div>
<div class="a" style="left:231.60px;top:215.4px;width:0.8px;height:0.8px;background:#9ab;border-radius:50%"></div>
<div class="a" style="left:243.80px;top:215.4px;width:0.8px;height:0.8px;background:#9ab;border-radius:50%"></div>
<div class="a" style="left:256.10px;top:215.4px;width:0.8px;height:0.8px;background:#9ab;border-radius:50%"></div>
<div class="a" style="left:266.5px;top:215.6px;width:5px;height:0.7px;background:#8cf"></div>
<svg class="a" style="left:326.6px;top:209.5px" width="4" height="3" viewBox="0 0 4 3"><path d="M0.4 2.4L2 0.8L3.6 2.4" fill="none" stroke="#fff" stroke-width="0.6"/></svg>
<svg class="a" style="left:335px;top:208.5px" width="5" height="5" viewBox="0 0 5 5"><path d="M2.5 4.5L0.2 1.8A3.3 3.3 0 0 1 4.8 1.8z" fill="#fff"/></svg>
<svg class="a" style="left:341.5px;top:208.7px" width="5" height="4.6" viewBox="0 0 5 4.6"><path d="M0.3 1.5h1l1.5-1.2v4l-1.5-1.2h-1z" fill="#fff"/><path d="M3.5 1.2c.6.6.6 1.6 0 2.2M4.2 .6c1 1 1 2.4 0 3.4" stroke="#fff" stroke-width="0.45" fill="none"/></svg>
<svg class="a" style="left:348.5px;top:208.8px" width="5.5" height="4.4" viewBox="0 0 5.5 4.4"><rect x="0.3" y="0.3" width="1" height="3.8" fill="#fff"/><path d="M1.3 0.5h3.9l-.8 1.4.8 1.4H1.3z" fill="#fff"/></svg>
<div class="a" style="left:356.5px;top:206.6px;width:17px;font-size:3.2px;line-height:4.5px;color:#fff;text-align:right">4:38 PM</div>
<div class="a" style="left:353px;top:211.4px;width:20.5px;font-size:3.2px;line-height:4.5px;color:#fff;text-align:right">5/24/2025</div>
<svg class="a" style="left:375.3px;top:208.3px" width="4.4" height="5" viewBox="0 0 4.4 5"><path d="M2.2 0.4c1.1 0 1.6.9 1.6 1.9v1.2l.4.6H.2l.4-.6V2.3C.6 1.3 1.1.4 2.2.4z" fill="none" stroke="#fff" stroke-width="0.45"/><path d="M1.6 4.4h1.2" stroke="#fff" stroke-width="0.45"/></svg></div>
  <div class="a" style="left:376.2px;top:199.4px;width:3.8px;height:3.8px;border-radius:50%;background:#d00000"></div>
  <!-- dialog -->
  <div class="a" style="left:13.5px;top:38px;width:363px;height:140px;background:#f0f0f0;border:1.5px solid #a6c8ea;border-top:none"></div>
  <div class="a" style="left:13.5px;top:38px;width:363px;height:8.2px;background:linear-gradient(#e3edf8,#c9dcf0);border:0.6px solid #a6c8ea;border-bottom:none"></div>
  <svg class="a" style="left:16px;top:40.4px" width="5" height="5" viewBox="0 0 5 5"><circle cx="2.5" cy="2.5" r="2.3" fill="#22b422"/><path d="M2.5 1.2v2.6M1.2 2.5h2.6" stroke="#fff" stroke-width="0.9"/></svg>
  <div class="a" id="dlgt" style="left:22px;top:38.9px;font-size:3.2px;line-height:8px;color:#111">Send via Email to Players</div>
  <div class="a" style="left:345.8px;top:40.5px;width:8px;height:4.5px;background:#dbe4ee;border:0.5px solid #8fa3b8;border-radius:1px"></div>
  <div class="a" style="left:354.8px;top:40.5px;width:8px;height:4.5px;background:#dbe4ee;border:0.5px solid #8fa3b8;border-radius:1px"></div>
  <div class="a" style="left:365.6px;top:40.5px;width:9px;height:4.5px;background:#d9433a;border:0.5px solid #a33;border-radius:1px"></div>
  <!-- right tab area -->
  <div class="a" style="left:148px;top:50px;width:224px;height:125px;background:#f4f4f4;border-left:0.6px solid #e6e6e6"></div><div class="a" style="left:148px;top:56px;width:224px;height:0.6px;background:#e6e6e6"></div>
  <div class="a" id="l6" style="left:150.6px;top:50.5px;font-size:3.15px;line-height:5px;color:#111">Send Email</div>
  <!-- left controls -->
  <div class="a" id="l1" style="left:17px;top:50.5px;font-size:3.15px;line-height:5px;color:#111">SwissSys Files path:</div>
  <div class="a" style="left:51px;top:50.6px;width:72.6px;height:5.4px;background:#fff;border:0.5px solid #dedede;font-size:3.4px;line-height:4.6px;padding-left:1.5px;color:#111">C:\CXI\Generated\SwissSysFiles\ SL_DEMO_S</div>
  <div class="a" style="left:126px;top:50px;width:20px;height:6.6px;background:#13b4ee;color:#fff;font-size:3.6px;line-height:6.6px;text-align:center">Select path</div>
  <div class="a" id="l2" style="left:17px;top:59.5px;font-size:3.15px;line-height:5px;color:#111">Select Tournament:</div>
  <div class="a" style="left:51px;top:58.6px;width:95px;height:5.4px;background:#fff;border:0.5px solid #e8e8e8;font-size:3.4px;line-height:4.6px;padding-left:1.5px;color:#111">SL_DEMO_S<svg style="position:absolute;right:2px;top:1.5px" width="3" height="2" viewBox="0 0 3 2"><path d="M0.3 0.3L1.5 1.5L2.7 0.3" fill="none" stroke="#555" stroke-width="0.5"/></svg></div>
  <div class="a" id="l3" style="left:17px;top:67.5px;font-size:3.15px;line-height:5px;color:#111">Select Round:</div>
  <div class="a" style="left:51px;top:67.4px;width:95px;height:5.2px;background:#fff;border:0.5px solid #e8e8e8;font-size:3.4px;line-height:4.4px;padding-left:1.5px;color:#111">Round 1<svg style="position:absolute;right:2px;top:1.5px" width="3" height="2" viewBox="0 0 3 2"><path d="M0.3 0.3L1.5 1.5L2.7 0.3" fill="none" stroke="#555" stroke-width="0.5"/></svg></div>
  <div class="a" id="l4" style="left:17px;top:74px;font-size:3.15px;line-height:5px;color:#33339a">Please select the section for each selected round.</div>
  <div class="a" id="l5" style="left:17px;top:80.5px;font-size:3.15px;line-height:5px;color:#111">Select Section:</div>
  <div class="a" style="left:51px;top:81px;width:95.25px;height:80.8px;background:#fff;border:0.6px solid #b8b8b8;border-radius:1px"></div>
  <div class="a" style="left:51.5px;top:81.6px;width:94.3px;height:4px;background:#0a64d8;font-size:3.4px;line-height:4px;padding-left:1px;color:#fff">Sec 1</div>
  <div class="a" style="left:51.5px;top:85.6px;font-size:3.4px;line-height:4px;padding-left:1px;color:#111">Sec 3</div>
  <div class="a" style="left:52.3px;top:164.2px;width:20px;height:6px;background:#fbfbfb;border:0.5px solid #dcdcdc;border-radius:1px;font-size:3.1px;line-height:5.2px;text-align:center;color:#111">Select All</div>
  <div class="a" style="left:74.4px;top:164.2px;width:20.6px;height:6px;background:#fbfbfb;border:0.5px solid #dcdcdc;border-radius:1px;font-size:3.1px;line-height:5.2px;text-align:center;color:#111">Unselect All</div>
  <div class="a" style="left:119.6px;top:164.2px;width:19.7px;height:6px;background:#fbfbfb;border:0.5px solid #dcdcdc;border-radius:1px;font-size:3.1px;line-height:5.2px;text-align:center;color:#111">Clear</div>
  <div class="a" style="left:153.9px;top:59.5px;font-size:3.15px;line-height:5px;color:#111">Outbox:</div>
  <div class="a" style="left:167.4px;top:60px;width:204px;height:102px;background:#ababab;border:0.7px solid #7a7a7a"></div>
  <div class="a" style="left:168px;top:60.5px;width:203px;height:6px;background:#fff;border-bottom:0.5px solid #ccc"></div>
  <div class="a" style="left:168px;top:66.5px;width:203px;height:6.25px;background:#fff;border-bottom:0.5px solid #ddd"></div>
  <div class="a" style="left:168px;top:72.75px;width:203px;height:5.85px;background:#0a64d8"></div>
  <div class="a" style="left:168px;top:72.75px;width:9.7px;height:5.85px;background:#cde6fb"></div>
  <div class="a" style="left:177.7px;top:60.5px;width:0.5px;height:18.1px;background:#ccc"></div>
  <div class="a" style="left:243px;top:60.5px;width:0.5px;height:18.1px;background:#ccc"></div>
  <div class="a" style="left:307px;top:60.5px;width:0.5px;height:18.1px;background:#ccc"></div>
  <div class="a" style="left:180px;top:60.5px;font-size:3.2px;line-height:6px;color:#111">Name</div>
  <div class="a" style="left:244.5px;top:60.5px;font-size:3.2px;line-height:6px;color:#111">Email</div>
  <div class="a" style="left:308.5px;top:60.5px;font-size:3.2px;line-height:6px;color:#111">Section</div>
  <div class="a" style="left:170px;top:66.5px;font-size:3.2px;line-height:6.25px;color:#111">&#9656;</div>
  <div class="a" style="left:180px;top:66.5px;font-size:3.2px;line-height:6.25px;color:#111">Williams, Michael P</div>
  <div class="a" style="left:308.5px;top:66.5px;font-size:3.2px;line-height:6.25px;color:#111">Sec 1</div>
  <div class="a" style="left:180px;top:72.75px;font-size:3.2px;line-height:5.85px;color:#fff">Ponna, Uditha Harshana</div>
  <div class="a" style="left:244.5px;top:72.75px;font-size:3.2px;line-height:5.85px;color:#fff">udithaharshana83@gmail.com</div>
  <div class="a" style="left:308.5px;top:72.75px;font-size:3.2px;line-height:5.85px;color:#fff">Sec 1</div>
  <div class="a" style="left:167px;top:164.2px;width:20px;height:6px;background:#fbfbfb;border:0.5px solid #dcdcdc;border-radius:1px;font-size:3.1px;line-height:5.2px;text-align:center;color:#111">Select All</div>
  <div class="a" style="left:189px;top:164.2px;width:20.6px;height:6px;background:#fbfbfb;border:0.5px solid #dcdcdc;border-radius:1px;font-size:3.1px;line-height:5.2px;text-align:center;color:#111">Unselect All</div>
  <div class="a" style="left:296.5px;top:164.2px;width:26.5px;height:6px;background:#fbfbfb;border:0.5px solid #dcdcdc;border-radius:1px;font-size:3.1px;line-height:5.2px;text-align:center;color:#111">Send to Selected</div>
  <div class="a" style="left:326.4px;top:164.2px;width:19.2px;height:6px;background:#fbfbfb;border:0.5px solid #dcdcdc;border-radius:1px;font-size:3.1px;line-height:5.2px;text-align:center;color:#111">Send to All</div>
  <div class="a" style="left:349px;top:164.2px;width:21px;height:6px;background:#fbfbfb;border:0.5px solid #dcdcdc;border-radius:1px;font-size:3.1px;line-height:5.2px;text-align:center;color:#111">Clear Outbox</div>
</div>

</body></html>
